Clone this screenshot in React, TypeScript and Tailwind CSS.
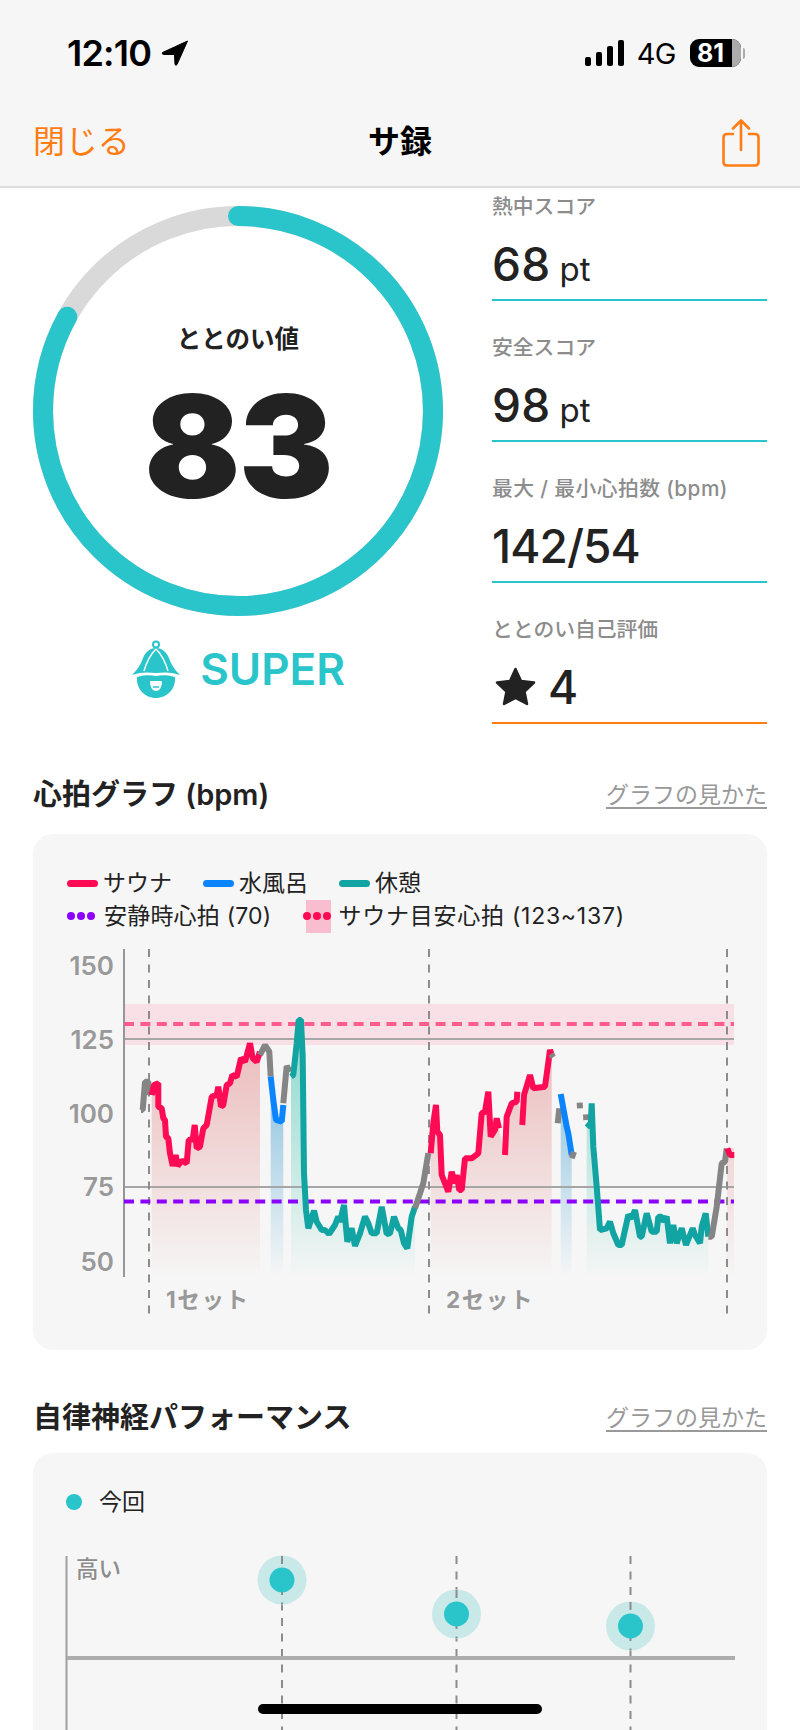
const TEAL = "#2ac4cb";
const ORANGE = "#ff7d13";

type Seg = { color: string; d: number[] };

// traced from the reference: left half offset (30,1040), right half offset (400,980), 3px per unit
const left = (d: number[]) => d.map((v, i) => (i % 2 === 0 ? 30 + v / 3 : 1040 + v / 3));
const right = (d: number[]) => d.map((v, i) => (i % 2 === 0 ? 400 + v / 3 : 980 + v / 3));
const toPoints = (d: number[]) => {
  const out: string[] = [];
  for (let i = 0; i < d.length; i += 2) out.push(`${d[i].toFixed(1)},${d[i + 1].toFixed(1)}`);
  return out.join(" ");
};
const toArea = (d: number[], bottom = 1274) =>
  `${d[0].toFixed(1)},${bottom} ${toPoints(d)} ${d[d.length - 2].toFixed(1)},${bottom}`;

const RED = "#ff0a54";
const BLUE = "#0a84ff";
const GREEN = "#12a3a3";
const GRAY = "#858585";

const red1 = left([365,165,372,135,385,130,385,200,395,205,400,235,405,240,408,290,415,295,420,340,428,378,437,345,443,378,455,362,470,370,476,300,488,298,494,255,500,325,510,320,520,265,530,255,545,170,560,165,565,140,573,200,580,195,590,135,600,130,607,105,620,110,633,55,645,65,660,10,668,55,680,65,690,35]);
const blue1 = left([722,110,730,180,738,240,755,245,760,195]);
const teal1 = left([783,110,790,105,800,10,806,-60,813,-60,818,50,822,400,828,510,835,565,852,512,860,545,875,570,885,570,897,582,915,555,925,530,930,545,942,495,952,605,965,565,975,618,990,580,1005,530,1015,550,1025,580,1040,580,1055,500,1070,582,1080,580,1092,530,1105,565,1112,570,1122,610,1132,625,1145,530,1155,500]);
const red2a = right([92,520,100,430,108,375,112,455,120,465,125,585,135,610,145,635,155,575,165,610,170,585,178,630,185,630,195,535,215,535,235,520,245,400,255,395,265,335,272,470,285,450,290,415,297,445]);
const red2b = right([315,525,320,410,335,370,350,365,352,335]);
const red2c = right([367,435,372,345,390,285,400,325,435,320,450,210,455,225]);
const blue2 = right([482,342,490,385,500,440,505,460,515,525]);
const teal2 = right([560,430,572,440,575,370,580,500,590,620,600,750,620,745,630,725,640,760,655,795,665,795,685,705,695,715,705,690,720,770,725,770,740,700,755,755,770,755,775,710,785,710,790,725,800,710,810,790,820,735,830,790,845,745,858,795,878,745,885,765,900,790,905,740,917,700,925,770]);
const red3 = right([982,505,990,525,1003,525]);

const segments: Seg[] = [
  { color: GRAY, d: left([333,210,338,210,345,125,355,125,358,165]) },
  { color: RED, d: red1 },
  { color: GRAY, d: left([690,45,705,15,718,35,722,110]) },
  { color: BLUE, d: blue1 },
  { color: GRAY, d: left([760,190,770,78,780,95]) },
  { color: GREEN, d: teal1 },
  { color: GRAY, d: left([1155,505,1170,460,1180,430,1195,340]) },
  { color: RED, d: red2a },
  { color: RED, d: red2b },
  { color: RED, d: red2c },
  { color: GRAY, d: right([453,222,460,232]) },
  { color: GRAY, d: right([473,430,478,385]) },
  { color: BLUE, d: blue2 },
  { color: GRAY, d: right([515,535,522,515]) },
  { color: GRAY, d: right([539,368,540,385]) },
  { color: GRAY, d: right([558,403,559,420]) },
  { color: GREEN, d: teal2 },
  { color: GRAY, d: right([925,770,935,770,950,680,965,550,975,545,980,505]) },
  { color: RED, d: red3 },
];

function StatusBar() {
  return (
    <div className="h-[100px] flex items-start pt-[38px] pl-[67px] pr-[55px] justify-between text-black">
      <div className="flex items-center gap-[10px] h-[30px]">
        <span className="text-[36px] font-semibold leading-none tracking-[-0.8px]">12:10</span>
        <svg width="28" height="26" viewBox="0 0 28 26">
          <path d="M26.5 1 L1.5 12.5 Q0.5 14 2.5 14.5 L13.5 14.5 L14 24.5 Q15 26 16 24.5 Z" fill="#000" stroke="#000" strokeWidth="1" strokeLinejoin="round" />
        </svg>
      </div>
      <div className="flex items-center h-[30px]">
        <div className="flex items-end gap-[5px] h-[26px]">
          <span className="w-[6px] h-[9px] rounded-[2px] bg-black" />
          <span className="w-[6px] h-[14px] rounded-[2px] bg-black" />
          <span className="w-[6px] h-[20px] rounded-[2px] bg-black" />
          <span className="w-[6px] h-[26px] rounded-[2px] bg-black" />
        </div>
        <span className="ml-[13px] mr-[1px] text-[29px] leading-none tracking-[-0.5px]">4G</span>
        <div className="ml-[13px] flex items-center">
          <div className="relative w-[51px] h-[28px] rounded-[9px] bg-black overflow-hidden">
            <span className="absolute right-0 top-0 h-full w-[9px] bg-[#ababab]" />
            <span className="absolute left-[7px] top-0 h-full flex items-center text-[25px] font-bold text-white leading-none">81</span>
          </div>
          <span className="ml-[2px] w-[2px] h-[11px] rounded-r-full bg-[#ababab]" />
        </div>
      </div>
    </div>
  );
}

function NavBar() {
  return (
    <div className="relative h-[86px] flex items-start justify-between pl-[33px] pr-[40px]">
      <span className="mt-[23px] text-[32px] leading-[38px] tracking-[0.4px] text-[#ff7d13]">閉じる</span>
      <span className="absolute left-0 right-0 top-[23px] text-center text-[32px] leading-[38px] font-bold text-black">サ録</span>
      <svg className="mt-[19px]" width="38" height="48" viewBox="0 0 38 48" fill="none" stroke={ORANGE} strokeWidth="2.6" strokeLinecap="round" strokeLinejoin="round">
        <path d="M11 15 H5 Q1.5 15 1.5 18.5 V43 Q1.5 46.5 5 46.5 H33 Q36.5 46.5 36.5 43 V18.5 Q36.5 15 33 15 H27" />
        <path d="M19 31 V2 M11 9.5 L19 1.5 L27 9.5" />
      </svg>
    </div>
  );
}

function Ring() {
  const r = 195;
  const c = 2 * Math.PI * r;
  return (
    <div className="relative w-[410px] h-[410px]">
      <svg width="410" height="410" viewBox="0 0 410 410" fill="none">
        <circle cx="205" cy="205" r={r} stroke="#d9d9d9" strokeWidth="20" />
        <circle
          cx="205"
          cy="205"
          r={r}
          stroke={TEAL}
          strokeWidth="20"
          strokeLinecap="round"
          strokeDasharray={`${c * 0.83} ${c}`}
          transform="rotate(-90 205 205)"
        />
      </svg>
      <div className="absolute inset-0 flex flex-col items-center text-[#222222]">
        <span className="mt-[117px] text-[24.5px] leading-[32px] font-semibold">ととのい値</span>
        <span className="mt-[15px] text-[142px] leading-[152px] font-black tracking-[-2px]">83</span>
      </div>
    </div>
  );
}

function SuperIcon() {
  return (
    <svg width="50" height="58" viewBox="133 640 50 58">
      <circle cx="158" cy="644.5" r="3" fill="none" stroke={TEAL} strokeWidth="2" />
      <path d="M134 675 C140 669 143 664 145 658 C148 651 153 648 158 648 C163 648 168 651 171 658 C173 664 176 669 182 675 C174 672 166 672 158 673 C150 672 142 672 134 675 Z" fill={TEAL} />
      <path d="M158 649 C151 656 148 664 146 671 M158 649 C165 656 168 664 170 671" fill="none" stroke="#fff" strokeWidth="1.5" />
      <path d="M139 677 C146 675 152 675 158 676 C164 675 170 675 177 677 C178 689 169 698 158 698 C147 698 138 689 139 677 Z" fill={TEAL} />
      <path d="M152 681 H164 C164 688 161 691 158 691 C155 691 152 688 152 681 Z" fill="#fff" />
      <path d="M155 687 H161" stroke={TEAL} strokeWidth="1.5" />
    </svg>
  );
}

function Stat({ label, accent, children }: { label: React.ReactNode; accent?: boolean; children: React.ReactNode }) {
  return (
    <div className={accent ? "h-[108px] border-b-2 border-[#ff7d13]" : "h-[108px] border-b-2 border-[#2ac4cb]"}>
      <div className="h-[28px] text-[20.8px] leading-[28px] font-medium text-[#8c8c8c] whitespace-nowrap">{label}</div>
      <div className="h-[78px] pt-[7px] flex items-center text-[#222222]">{children}</div>
    </div>
  );
}

function Pt({ value }: { value: string }) {
  return (
    <div className="flex items-baseline">
      <span className="text-[46px] leading-none font-medium tracking-[0.3px]">{value}</span>
      <span className="ml-[9px] text-[33px] leading-none">pt</span>
    </div>
  );
}

function LegendLine({ className, label }: { className: string; label: string }) {
  return (
    <div className="flex items-center">
      <span className={className} />
      <span className="ml-[5px] text-[23px] leading-[32px] text-[#222222]">{label}</span>
    </div>
  );
}

function HeartChart() {
  return (
    <svg className="block" width="734" height="378" viewBox="33 945 734 378" fontFamily="Inter, sans-serif">
      <defs>
        <linearGradient id="fillRed" gradientUnits="userSpaceOnUse" x1="0" y1="1040" x2="0" y2="1274">
          <stop offset="0" stopColor="#e8a8a8" stopOpacity="0.75" />
          <stop offset="1" stopColor="#e8a8a8" stopOpacity="0.02" />
        </linearGradient>
        <linearGradient id="fillBlue" gradientUnits="userSpaceOnUse" x1="0" y1="1110" x2="0" y2="1274">
          <stop offset="0" stopColor="#8fc4e0" stopOpacity="0.85" />
          <stop offset="1" stopColor="#8fc4e0" stopOpacity="0.02" />
        </linearGradient>
        <linearGradient id="fillTeal" gradientUnits="userSpaceOnUse" x1="0" y1="1040" x2="0" y2="1274">
          <stop offset="0" stopColor="#7fd6c8" stopOpacity="0.85" />
          <stop offset="1" stopColor="#7fd6c8" stopOpacity="0.02" />
        </linearGradient>
      </defs>
      <rect x="124" y="1004" width="610" height="41" fill="#f9e0e6" />
      <polygon points={toArea(red1)} fill="url(#fillRed)" />
      <polygon points={toArea(blue1)} fill="url(#fillBlue)" />
      <polygon points={toArea(teal1)} fill="url(#fillTeal)" />
      <polygon points={toArea([...red2a, ...red2b, ...red2c])} fill="url(#fillRed)" />
      <polygon points={toArea(blue2)} fill="url(#fillBlue)" />
      <polygon points={toArea(teal2)} fill="url(#fillTeal)" />
      <rect x="727" y="1148" width="7" height="126" fill="url(#fillRed)" />
      <path d="M124 1039H734M124 1187H734" stroke="#a6a6a6" strokeWidth="2" />
      <path d="M124 949V1277" stroke="#969696" strokeWidth="2" />
      <path d="M149 949V1317M429 949V1317M727 949V1317" stroke="#8c8c8c" strokeWidth="2" strokeDasharray="8 7.5" />
      <path d="M124 1024H734" stroke="#ff5c8d" strokeWidth="4" strokeDasharray="10 6.4" />
      <path d="M124 1201.5H734" stroke="#8b00ff" strokeWidth="4" strokeDasharray="10 6.4" />
      {segments.map((s, i) => (
        <polyline key={i} points={toPoints(s.d)} fill="none" stroke={s.color} strokeWidth="6" strokeLinejoin="bevel" />
      ))}
      <g fill="#999999" fontSize="26" fontWeight="600" textAnchor="end">
        <text x="114" y="975">150</text>
        <text x="114" y="1049">125</text>
        <text x="114" y="1123">100</text>
        <text x="114" y="1196">75</text>
        <text x="114" y="1271">50</text>
      </g>
      <g fill="#999999" fontSize="22.5" fontWeight="700" letterSpacing="1.6" fontFamily="Inter, 'Noto Sans CJK JP', sans-serif">
        <text x="166" y="1308">1セット</text>
        <text x="446" y="1308">2セット</text>
      </g>
    </svg>
  );
}

function NervePoint({ cx, cy }: { cx: number; cy: number }) {
  return (
    <g>
      <circle cx={cx} cy={cy} r="24.5" fill="#c9e9e9" />
      <path d={`M${cx} ${cy - 24}V${cy + 24}`} stroke="#8c8c8c" strokeWidth="2" strokeDasharray="8 7.5" />
      <circle cx={cx} cy={cy} r="12.5" fill={TEAL} />
    </g>
  );
}

function NerveChart() {
  const xs = [282, 456.5, 630.5];
  return (
    <svg className="block" width="734" height="190" viewBox="33 1540 734 190">
      <path d="M66.5 1556V1730" stroke="#a0a0a0" strokeWidth="2" />
      {xs.map((x) => (
        <path key={x} d={`M${x} 1556V1730`} stroke="#8c8c8c" strokeWidth="2" strokeDasharray="8 7.5" />
      ))}
      <rect x="67" y="1656" width="668" height="4" fill="#adadad" />
      <NervePoint cx={282} cy={1580} />
      <NervePoint cx={456.5} cy={1614} />
      <NervePoint cx={630.5} cy={1626} />
      <text x="76" y="1577" fontSize="22.5" fontWeight="500" fill="#8c8c8c" fontFamily="Inter, 'Noto Sans CJK JP', sans-serif">高い</text>
    </svg>
  );
}

function SectionHead({ title, className }: { title: string; className: string }) {
  return (
    <div className={className}>
      <h2 className="text-[29px] leading-[40px] font-semibold text-[#222222]">{title}</h2>
      <a className="text-[23px] leading-[40px] text-[#999999] underline underline-offset-4">グラフの見かた</a>
    </div>
  );
}

export default function App() {
  return (
    <div className="relative w-[800px] h-[1730px] overflow-hidden bg-white font-['Inter','Noto_Sans_CJK_JP',sans-serif]">
      <header className="h-[188px] bg-[#f6f6f6] border-b-2 border-[#dddddd]">
        <StatusBar />
        <NavBar />
      </header>

      <section className="flex pt-[5px] pl-[33px] pr-[33px]">
        <div className="w-[410px] pt-[13px]">
          <Ring />
          <div className="mt-[24px] flex justify-center items-center gap-[19px]">
            <SuperIcon />
            <span className="text-[44px] leading-[58px] font-semibold text-[#2ac4cb]">SUPER</span>
          </div>
        </div>
        <div className="ml-[49px] w-[275px] flex flex-col gap-[33px]">
          <Stat label="熱中スコア"><Pt value="68" /></Stat>
          <Stat label="安全スコア"><Pt value="98" /></Stat>
          <Stat label={<span className="tracking-[0.4px]">最大 / 最小心拍数 (bpm)</span>}>
            <span className="text-[46px] leading-none font-medium tracking-[-0.9px]">142/54</span>
          </Stat>
          <Stat label="ととのい自己評価" accent>
            <div className="flex items-center">
              <svg className="ml-[3px]" width="41" height="39" viewBox="0 0 41 39">
                <path d="M20.5 2 L26 14 L39 15.5 L29.5 24.5 L32 37 L20.5 31 L9 37 L11.5 24.5 L2 15.5 L15 14 Z" fill="#222222" stroke="#222222" strokeWidth="2.5" strokeLinejoin="round" />
              </svg>
              <span className="ml-[12px] text-[46px] leading-none font-medium">4</span>
            </div>
          </Stat>
        </div>
      </section>

      <section className="px-[33px]">
        <SectionHead title="心拍グラフ (bpm)" className="mt-[51px] h-[40px] flex justify-between items-center" />
        <div className="mt-[19px] h-[516px] rounded-[20px] bg-[#f6f6f6] overflow-hidden">
          <div className="pt-[33px] pl-[34px]">
            <div className="flex gap-[31px]">
              <LegendLine className="w-[31px] h-[7px] rounded-full bg-[#ff0a54]" label="サウナ" />
              <LegendLine className="w-[31px] h-[7px] rounded-full bg-[#0a84ff]" label="水風呂" />
              <LegendLine className="w-[31px] h-[7px] rounded-full bg-[#12a3a3]" label="休憩" />
            </div>
            <div className="flex items-center mt-[1px] h-[32px]">
              <div className="flex gap-[2px] w-[31px]">
                <span className="w-[8px] h-[8px] rounded-full bg-[#8b00ff]" />
                <span className="w-[8px] h-[8px] rounded-full bg-[#8b00ff]" />
                <span className="w-[8px] h-[8px] rounded-full bg-[#8b00ff]" />
              </div>
              <span className="ml-[6px] text-[23px] leading-[32px] tracking-[0.2px] text-[#222222]">安静時心拍 (70)</span>
              <div className="relative ml-[35px] w-[25px] h-[33px] bg-[#f9bdd0]">
                <div className="absolute -left-[3px] top-[12px] flex gap-[2px]">
                  <span className="w-[8px] h-[8px] rounded-full bg-[#ff0a54]" />
                  <span className="w-[8px] h-[8px] rounded-full bg-[#ff0a54]" />
                  <span className="w-[8px] h-[8px] rounded-full bg-[#ff0a54]" />
                </div>
              </div>
              <span className="ml-[7px] text-[23px] leading-[32px] tracking-[0.75px] text-[#222222]">サウナ目安心拍 (123~137)</span>
            </div>
          </div>
          <div className="mt-[13px]">
            <HeartChart />
          </div>
        </div>

        <SectionHead title="自律神経パフォーマンス" className="mt-[48px] h-[40px] flex justify-between items-center" />
        <div className="mt-[15px] h-[300px] rounded-t-[20px] bg-[#f6f6f6] overflow-hidden">
          <div className="pt-[35px] pl-[33px] flex items-center h-[63px]">
            <span className="w-[16px] h-[16px] rounded-full bg-[#2ac4cb]" />
            <span className="ml-[17px] text-[23px] leading-[28px] text-[#222222]">今回</span>
          </div>
          <div className="mt-[24px]">
            <NerveChart />
          </div>
        </div>
      </section>

      <div className="absolute left-[258px] top-[1704px] w-[284px] h-[10px] rounded-full bg-black" />
    </div>
  );
}
